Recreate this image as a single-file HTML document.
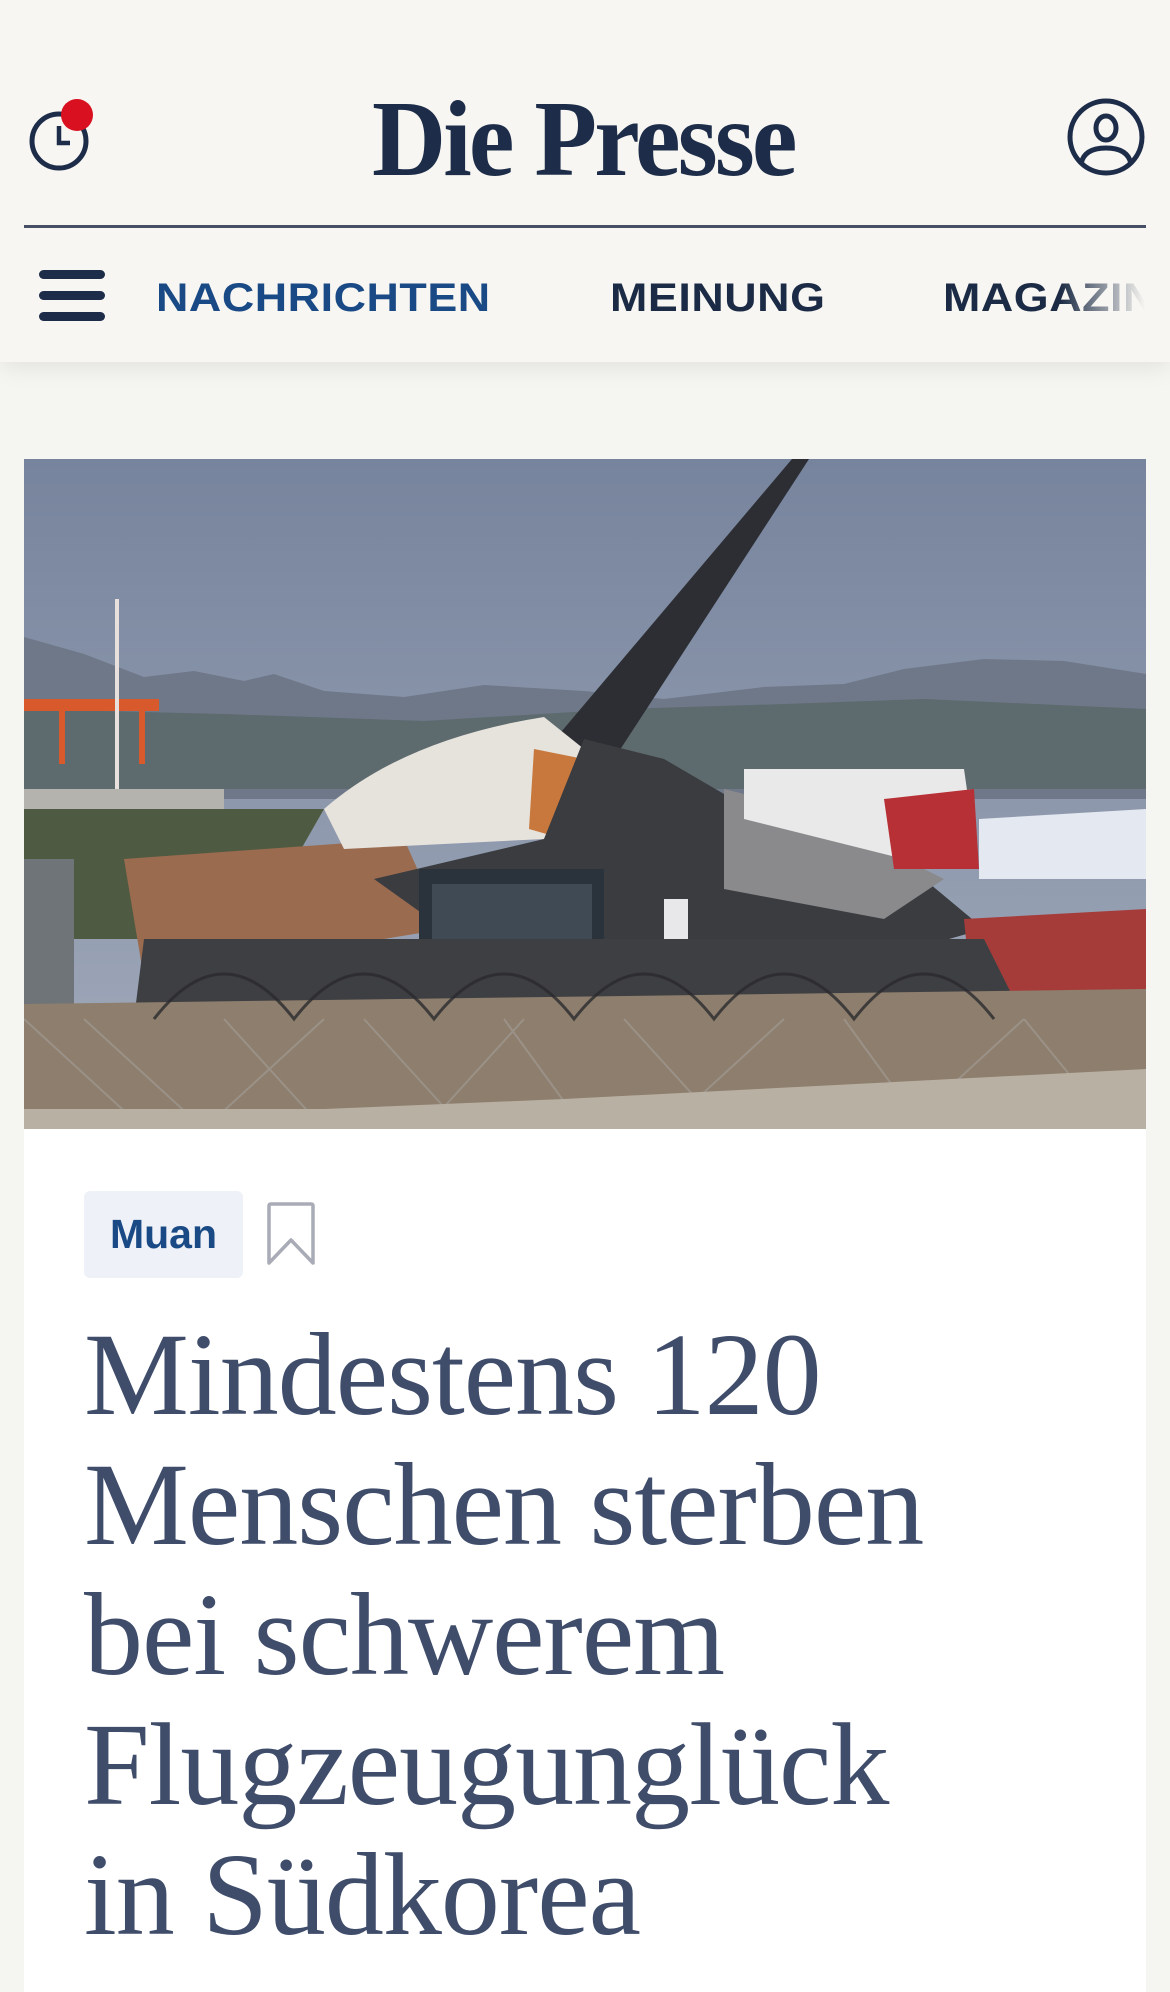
<!DOCTYPE html>
<html><head><meta charset="utf-8"><style>
*{margin:0;padding:0;box-sizing:border-box}
html,body{width:1170px;height:1992px;overflow:hidden;background:#f5f5f2}
body{position:relative;font-family:"Liberation Sans",sans-serif}
.hdr{position:absolute;left:0;top:0;width:1170px;height:362px;background:#f7f6f2;box-shadow:0 6px 22px rgba(0,0,0,0.08)}
.logo{position:absolute;left:372px;top:78px;font-family:"Liberation Serif",serif;font-weight:bold;font-size:108px;color:#1d2d49;letter-spacing:-3px;transform:scaleX(0.95);transform-origin:left top;white-space:nowrap}
.rule{position:absolute;left:24px;top:225px;width:1122px;height:3px;background:#464f66}
.nav{position:absolute;top:276px;font-weight:bold;font-size:40px;letter-spacing:0.5px;color:#1c2b45;white-space:nowrap;transform:scaleX(1.12);transform-origin:left}
.card{position:absolute;left:24px;top:1129px;width:1122px;height:900px;background:#fff}
.tag{position:absolute;left:84px;top:1191px;width:159px;height:87px;background:#eef1f7;border-radius:6px;color:#1a4a85;font-weight:bold;font-size:41px;line-height:87px;text-align:center}
.h1{position:absolute;left:84px;top:1310px;font-family:"Liberation Serif",serif;font-size:118px;line-height:130px;color:#3f4d6b;letter-spacing:-1px;width:1000px}
</style></head><body>
<div class="hdr">
  <svg style="position:absolute;left:26px;top:96px" width="80" height="80" viewBox="0 0 80 80">
    <circle cx="33" cy="45" r="27" fill="none" stroke="#1d2d49" stroke-width="5"/>
    <path d="M33 30 V47 H44" fill="none" stroke="#1d2d49" stroke-width="4.5"/>
    <circle cx="51" cy="19" r="16" fill="#d9101f"/>
  </svg>
  <div class="logo">Die Presse</div>
  <svg style="position:absolute;left:1064px;top:97px" width="84" height="80" viewBox="0 0 84 80">
    <circle cx="42" cy="40" r="36" fill="none" stroke="#1d2d49" stroke-width="5"/>
    <ellipse cx="42" cy="31" rx="10" ry="12" fill="none" stroke="#1d2d49" stroke-width="5"/>
    <path d="M17 67 Q20 51 42 51 Q64 51 67 67" fill="none" stroke="#1d2d49" stroke-width="5"/>
  </svg>
  <div class="rule"></div>
  <svg style="position:absolute;left:39px;top:268px" width="68" height="56" viewBox="0 0 68 56">
    <rect x="0" y="2" width="66" height="9" rx="4.5" fill="#1d2d49"/>
    <rect x="0" y="23" width="66" height="9" rx="4.5" fill="#1d2d49"/>
    <rect x="0" y="44" width="66" height="9" rx="4.5" fill="#1d2d49"/>
  </svg>
  <div class="nav" style="left:156px;color:#1a4a85">NACHRICHTEN</div>
  <div class="nav" style="left:610px">MEINUNG</div>
  <div class="nav" style="left:943px;-webkit-mask-image:linear-gradient(90deg,#000 55%,transparent 95%);mask-image:linear-gradient(90deg,#000 55%,transparent 95%)">MAGAZIN</div>
</div>
<svg style="position:absolute;left:24px;top:459px" width="1122" height="670" viewBox="0 0 1122 670">
  <defs><linearGradient id="sky" x1="0" y1="0" x2="0" y2="1"><stop offset="0" stop-color="#77849d"/><stop offset="1" stop-color="#a2abbb"/></linearGradient></defs>
  <rect width="1122" height="670" fill="url(#sky)"/>
  <path d="M0 178 L60 195 L120 218 L170 212 L220 222 L250 215 L300 232 L380 238 L460 226 L560 232 L640 240 L740 228 L820 225 L880 210 L960 200 L1040 202 L1122 215 V340 H0Z" fill="#6f7888"/>
  <path d="M0 250 L200 255 L400 262 L600 250 L760 245 L900 240 L1122 250 V330 H0Z" fill="#5d6a6e"/>
  <rect x="0" y="330" width="200" height="28" fill="#b5b3ae"/>
  <rect x="0" y="240" width="135" height="12" fill="#d85a2c"/>
  <rect x="35" y="250" width="6" height="55" fill="#d85a2c"/><rect x="115" y="250" width="6" height="55" fill="#d85a2c"/>
  <rect x="91" y="140" width="4" height="190" fill="#e8e0dc"/>
  <path d="M0 350 H300 L260 420 L180 480 L0 480Z" fill="#4f5a42"/>
  <path d="M100 400 L380 380 L420 470 L120 520Z" fill="#9a6b4e"/>
  <path d="M768 0 L785 0 L590 300 L510 305Z" fill="#2c2e33"/>
  <path d="M300 350 Q380 280 520 258 L560 290 L520 380 L320 390Z" fill="#e6e2dc"/>
  <path d="M510 290 L560 300 L540 380 L505 370Z" fill="#c8783c"/>
  <path d="M560 280 L640 300 L760 370 L900 420 L960 470 L820 510 L600 500 L420 470 L350 420 L520 380Z" fill="#3a3c40"/>
  <path d="M700 330 L780 350 L920 420 L860 460 L700 430Z" fill="#8a8a8c"/>
  <path d="M720 310 L940 310 L950 380 L880 400 L720 360Z" fill="#e9e9ea"/>
  <path d="M860 340 L950 330 L955 410 L870 410Z" fill="#b73035"/>
  <path d="M955 360 L1122 350 V420 L955 420Z" fill="#e4e8f0"/>
  <path d="M940 460 L1122 450 V560 L950 560Z" fill="#a53c3a"/>
  <rect x="395" y="410" width="185" height="100" fill="#2a323c"/>
  <rect x="408" y="425" width="160" height="65" fill="#3f4a55"/>
  <rect x="640" y="440" width="24" height="90" fill="#e8e8ea"/>
  <path d="M0 400 L50 400 L50 560 L0 560Z" fill="#6e7478"/>
  <path d="M120 480 L960 480 L1000 560 L110 560Z" fill="#3e3f42"/>
  <path d="M0 545 L1122 530 V670 H0Z" fill="#8e7e6d"/>
  <g stroke="#2a2b2e" stroke-width="3" fill="none" opacity="0.8">
    <path d="M130 560 Q200 470 270 560 Q340 470 410 560 Q480 470 550 560 Q620 470 690 560 Q760 470 830 560 Q900 470 970 560"/>
  </g>
  <g stroke="#a09a93" stroke-width="2" fill="none" opacity="0.7">
    <path d="M0 560 L120 670 M60 560 L180 670 M200 560 L300 670 M340 560 L440 670 M480 560 L560 670 M600 560 L700 670 M820 560 L900 670 M1000 560 L1090 670 M300 560 L180 670 M500 560 L400 670 M760 560 L640 670 M1000 560 L880 670"/>
  </g>
  <path d="M0 650 L300 650 L540 640 L1122 610 V670 H0Z" fill="#b8b0a3"/>
</svg>
<div class="card"></div>
<div class="tag">Muan</div>
<svg style="position:absolute;left:266px;top:1202px" width="50" height="64" viewBox="0 0 50 64">
  <path d="M3 4 Q3 2 5 2 H45 Q47 2 47 4 V61 L25 38 L3 61 Z" fill="none" stroke="#a9acb6" stroke-width="3.5" stroke-linejoin="round"/>
</svg>
<div class="h1">Mindestens 120<br>Menschen sterben<br>bei schwerem<br>Flugzeugunglück<br>in Südkorea</div>
</body></html>
